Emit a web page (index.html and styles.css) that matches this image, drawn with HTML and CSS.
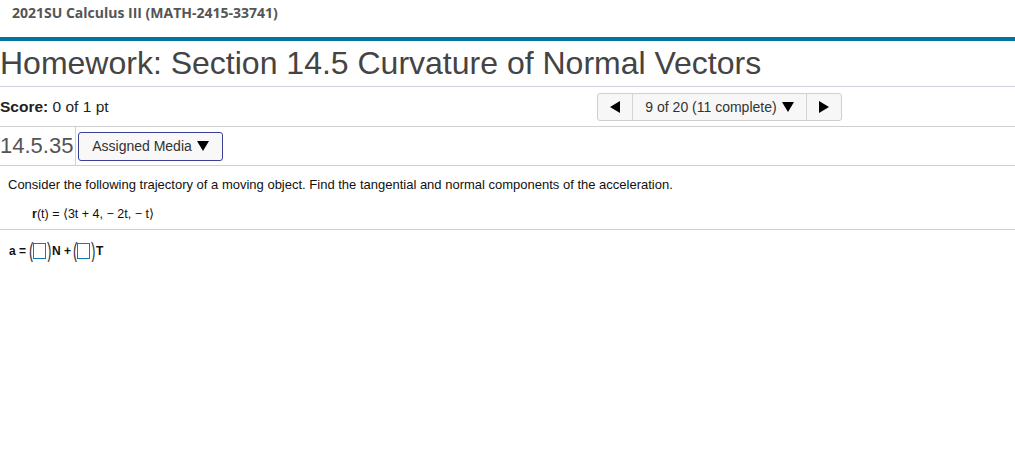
FILE: index.html
```html
<!DOCTYPE html>
<html>
<head>
<meta charset="utf-8">
<link rel="stylesheet" href="styles.css">
</head>
<body>
<div class="course">2021SU Calculus III (MATH-2415-33741)</div>
<div class="bluebar"></div>
<h1 class="title">Homework: Section 14.5 Curvature of Normal Vectors</h1>
<div class="scorerow">
  <div class="score"><b>Score:</b> 0 of 1 pt</div>
  <div class="nav">
    <div class="navbtn"><span class="tri-left"></span></div>
    <div class="navmid">9 of 20 (11 complete) <span class="tri-down"></span></div>
    <div class="navbtn"><span class="tri-right"></span></div>
  </div>
</div>
<div class="qrow">
  <div class="qnum">14.5.35</div>
  <div class="media">Assigned Media <span class="tri-down"></span></div>
</div>
<div class="question">
  <p class="prompt">Consider the following trajectory of a moving object. Find the tangential and normal components of the acceleration.</p>
  <p class="formula"><b>r</b>(t) = &#x27E8;3t + 4, &#x2212; 2t, &#x2212; t&#x27E9;</p>
  <div class="answer">
    <span class="bold lbl">a =</span>
    <span class="paren">(</span><span class="box"></span><span class="paren">)</span><span class="bold lbl2">N +</span>
    <span class="paren">(</span><span class="box"></span><span class="paren">)</span><span class="bold lbl3">T</span>
  </div>
</div>
</body>
</html>
```

FILE: styles.css
```css
body {
  margin: 0;
  font-family: "Liberation Sans", Arial, sans-serif;
  background: #fff;
  color: #222;
}
.course {
  font-family: "Open Sans", sans-serif;
  font-weight: 700;
  font-size: 14px;
  color: #555;
  padding: 3px 0 0 12px;
  height: 33px;
  box-sizing: border-box;
}
.bluebar {
  height: 4px;
  background: #00769e;
  margin-top: 4px;
}
.title {
  margin: 0;
  font-weight: 400;
  font-size: 32px;
  color: #444;
  height: 45px;
  line-height: 45px;
  border-bottom: 1px solid #cfd1dc;
}
.scorerow {
  display: flex;
  align-items: center;
  height: 39px;
  border-bottom: 1px solid #cfcfd4;
}
.score {
  font-size: 15.5px;
  color: #222;
  width: 597px;
}
.nav {
  display: flex;
  height: 28px;
  border: 1px solid #cfcfcf;
  border-radius: 3px;
  background: #f7f7f7;
  box-sizing: border-box;
}
.navbtn {
  width: 34px;
  display: flex;
  align-items: center;
  justify-content: center;
}
.navmid {
  width: 173px;
  border-left: 1px solid #d4d4d4;
  border-right: 1px solid #d4d4d4;
  display: flex;
  align-items: center;
  justify-content: center;
  font-size: 14px;
  color: #333;
  gap: 5px;
}
.tri-left {
  width: 0; height: 0;
  border-top: 6px solid transparent;
  border-bottom: 6px solid transparent;
  border-right: 10px solid #000;
}
.tri-right {
  width: 0; height: 0;
  border-top: 6px solid transparent;
  border-bottom: 6px solid transparent;
  border-left: 10px solid #000;
}
.tri-down {
  display: inline-block;
  width: 0; height: 0;
  border-left: 6px solid transparent;
  border-right: 6px solid transparent;
  border-top: 10px solid #000;
}
.qrow {
  display: flex;
  align-items: center;
  height: 38px;
  border-bottom: 1px solid #cfcfd4;
}
.qnum {
  font-size: 22px;
  color: #555;
  width: 75px;
  height: 38px;
  line-height: 38px;
  border-right: 1px solid #cfcfd4;
}
.media {
  margin-left: 2px;
  width: 145px;
  height: 29px;
  box-sizing: border-box;
  border: 1px solid #3c3f96;
  border-radius: 3px;
  background: #f8f8f8;
  display: flex;
  align-items: center;
  justify-content: center;
  gap: 5px;
  font-size: 14px;
  color: #333;
}
.question {
  padding-top: 10px;
}
.prompt {
  margin: 0 0 0 8px;
  font-size: 13px;
  color: #111;
  height: 18px;
  line-height: 18px;
}
.formula {
  margin: 11px 0 0 0;
  font-size: 12.5px;
  color: #111;
  height: 18px;
  line-height: 18px;
  padding: 0 0 6px 32px;
  border-bottom: 1px solid #cfcfd4;
}
.answer {
  margin-top: 10px;
  padding-left: 9px;
  display: flex;
  align-items: center;
  font-size: 12px;
  color: #111;
}
.bold { font-weight: 700; }
.lbl { margin-right: 2px; }
.lbl2 { margin: 0 1px 0 1px; }
.lbl3 { margin-left: 1px; }
.paren {
  display: inline-block;
  width: 5px;
  text-align: center;
  font-size: 22px;
  line-height: 22px;
  color: #333;
  transform: scaleX(0.6);
}
.box {
  width: 13px;
  height: 16px;
  border: 1px solid #1778b0;
  box-sizing: border-box;
}
```
